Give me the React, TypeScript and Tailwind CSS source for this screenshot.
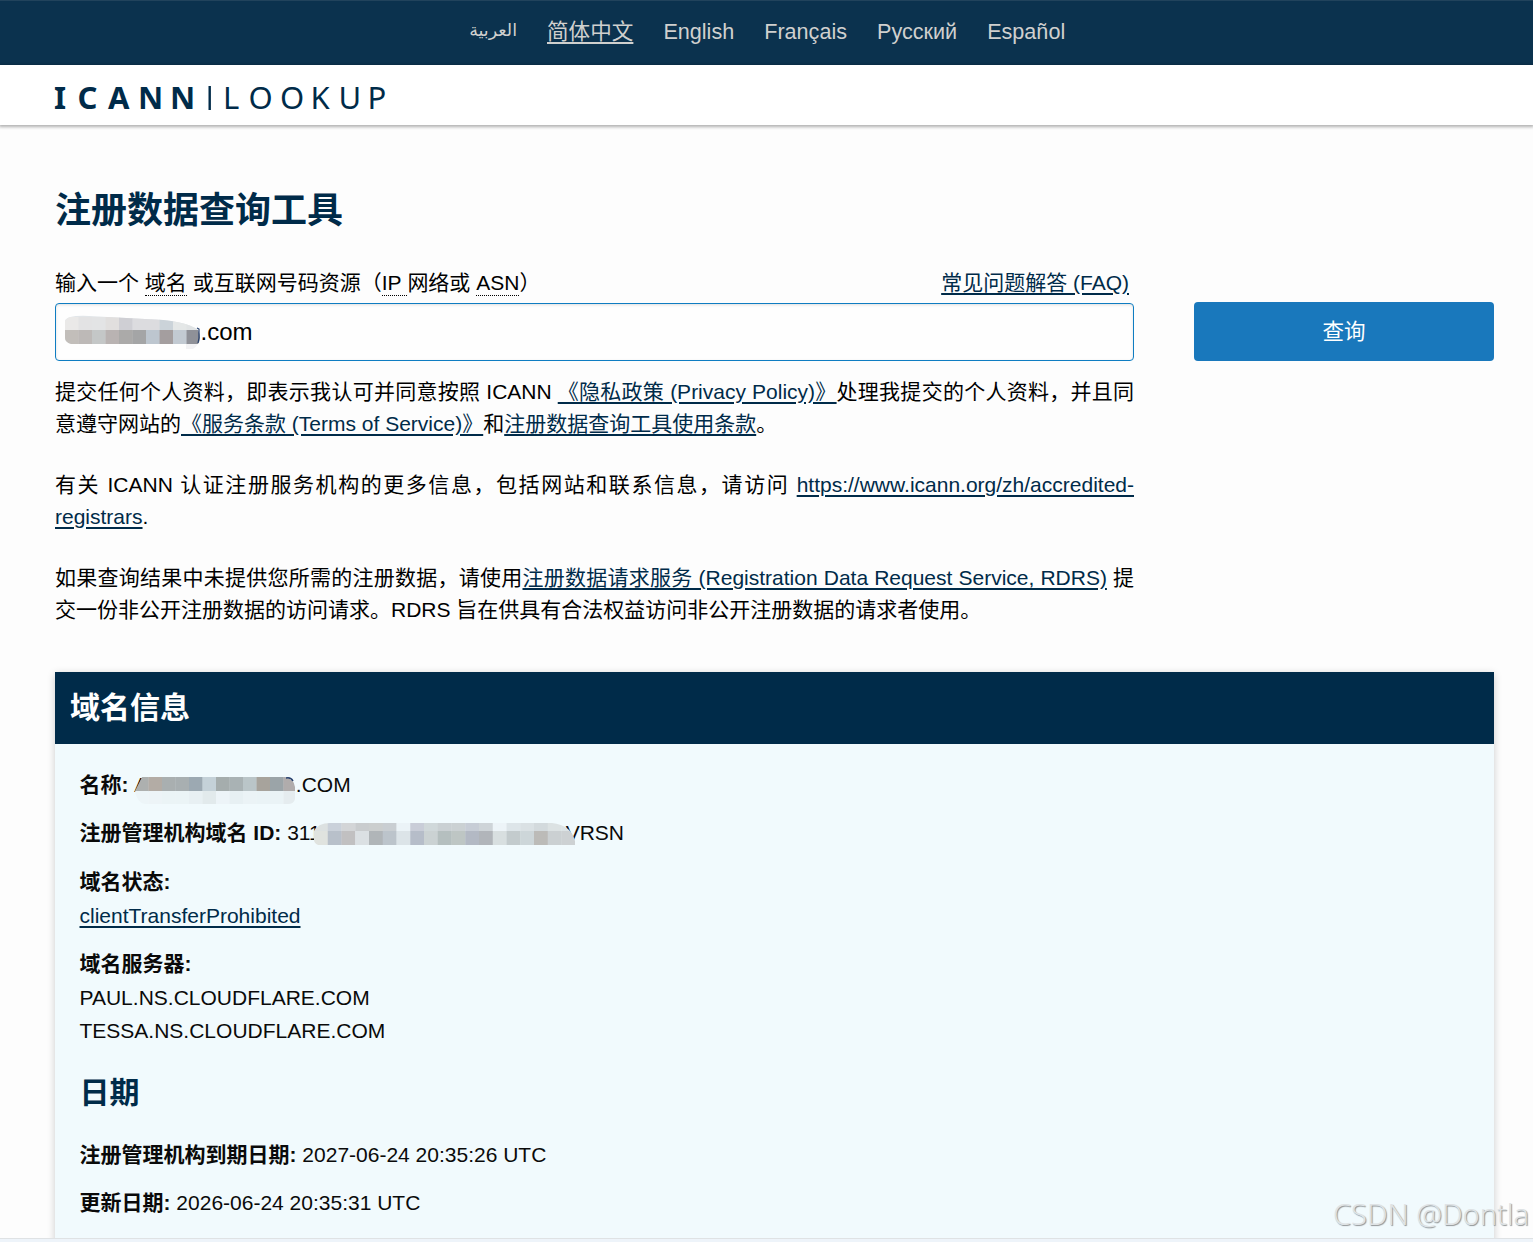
import type { ReactNode } from "react";

const languages = ["简体中文", "English", "Français", "Русский", "Español"];

const domainMosaic = {
  top: ["#eae9e8", "#e3e3e4", "#e3e4e5", "#e1dfde", "#cfcfd4", "#dcdcdf", "#dcdcdf", "#cbd3d9", "#e4e7e7", "#e0e3e4", "#dfdfe0"],
  bottom: ["#c2beba", "#bdb9b7", "#c4c7c7", "#b9b3b2", "#abaaa9", "#a4a5a6", "#bdc6cf", "#a49e9f", "#c2cad2", "#8f9198"],
};

const nameMosaic = ["#adb0af", "#b3aca5", "#a9afb0", "#a8afb1", "#9ca9b2", "#c4d1d8", "#a5adad", "#a9b2b4", "#bac5c8", "#a7a39c", "#9ba4a8", "#b0acac"];
const nameMosaicLow = ["#edf5f8", "#edf4f7", "#ebf4f6", "#ebf4f6", "#e8f0f3", "#e2eaec", "#edf4f8", "#e7f0f3", "#ebf3f6", "#eaf3f6", "#eaf3f6", "#e5ecef"];

const idMosaicTop = ["#dce1e1", "#cad1da", "#d3d5d7", "#c9ccce", "#cbcece", "#c9ced2", "#ebf3f7", "#c9cdd8", "#d0d8da", "#cad0d3", "#cbd1d3", "#c7cdd6", "#ced4d8", "#edf4f8", "#dde5e9", "#dae1e4", "#d3dadd", "#dce2e3", "#dce3e5"];
const idMosaic = ["#e0e3df", "#b8c0ca", "#c1c0c1", "#dbe0e3", "#b0b5b8", "#bcc4cb", "#dce4e8", "#b6bdc9", "#cbd2d3", "#b5bfbf", "#bec6c4", "#b3b9c4", "#b1b5ba", "#d8dfe0", "#c3cbcd", "#cdd6d9", "#bcbbb8", "#cbd0d2", "#cdd1d3"];

function Link({ children }: { children: ReactNode }) {
  return (
    <a href="#" className="text-[#002b49] underline decoration-2 underline-offset-[3px]">
      {children}
    </a>
  );
}

function Term({ children }: { children: ReactNode }) {
  return <span className="inline-block h-[26px] border-b border-dotted border-black leading-[26px]">{children}</span>;
}

function Cells({ colors, y, height, size }: { colors: string[]; y: number; height: number; size: number }) {
  return (
    <>
      {colors.map((color, i) => (
        <rect key={i} x={i * size} y={y} width={size + 0.3} height={height} fill={color} />
      ))}
    </>
  );
}

function Field({ label, children }: { label: string; children: ReactNode }) {
  return (
    <div className="relative mb-[15.5px] h-[33px] whitespace-nowrap leading-[33px]">
      <b>{label}:</b> {children}
    </div>
  );
}

function Logo() {
  return (
    <svg width="345" height="44" viewBox="0 0 345 44" fill="#002b49" className="block overflow-visible">
      <text
        x="-1 22.5 53 83 115"
        y="33.5"
        className="font-['Noto_Sans'] text-[31px] font-bold"
      >
        ICANN
      </text>
      <rect x="153.5" y="11" width="2.4" height="24" />
      <text
        x="168 193.5 225 255.5 283.5 312.5"
        y="33.5"
        className="font-['Noto_Sans'] text-[31px]"
      >
        LOOKUP
      </text>
    </svg>
  );
}

export default function App() {
  return (
    <div className="relative h-[1242px] w-[1533px] overflow-hidden bg-[#fdfdfd] font-['Liberation_Sans','Noto_Sans_CJK_SC',sans-serif] text-[21px] text-black">
      <nav className="flex h-[65px] items-start gap-[30px] border-t border-[#21435c] bg-[#0b324e] pl-[470px] pt-[15px] text-[21.6px] leading-8 text-[#d0d0ce]">
        <span className="-mt-0.5 w-[47px] whitespace-nowrap font-['DejaVu_Sans'] text-[17.5px]" dir="rtl">العربية</span>
        {languages.map((language, i) => (
          <a
            key={language}
            href="#"
            className={i === 0 ? "underline decoration-2 underline-offset-[3px]" : ""}
          >
            {language}
          </a>
        ))}
      </nav>

      <header className="relative h-[60px] bg-white pl-[55px] pt-[10px] shadow-[0_1px_3px_1px_rgba(0,0,0,0.3)]">
        <Logo />
      </header>

      <main className="pl-[55px] pr-[39px] pt-[59px]">
        <h1 className="h-[54px] text-[36px] font-bold leading-[54px] text-[#002b49]">注册数据查询工具</h1>

        <div className="mt-[29px] flex items-start justify-between">
          <div className="w-[1079px]">
            <div className="flex h-[36px] justify-between pr-[5px] leading-8">
              <label>
                输入一个 <Term>域名</Term> 或互联网号码资源（<Term>IP&nbsp;</Term>网络或 <Term>ASN</Term>）
              </label>
              <Link>常见问题解答 (FAQ)</Link>
            </div>
            <div className="relative h-[58px] rounded-[4px] border border-[#0f7dc2] bg-[#fefefe] pl-[144.5px] text-[24px] leading-[56px] shadow-[inset_0_1px_3px_rgba(0,0,0,0.12)]">
              .com
              <svg className="absolute left-[9px] top-[9px]" width="138" height="36">
                <clipPath id="domain-smudge">
                  <path d="M0 8 Q2 2 24 3 L80 6 Q120 7 133 17 Q137 25 133 31 H6 Q0 29 0 25Z" />
                </clipPath>
                <g clipPath="url(#domain-smudge)">
                  <rect width="138" height="36" fill="#e2e6e9" />
                  <Cells colors={domainMosaic.top} y={4} height={13} size={13.5} />
                  <Cells colors={domainMosaic.bottom} y={17} height={14} size={13.5} />
                </g>
                <path d="M121 31h12q-4 6-12 8z" fill="#f2f2f4" />
                <path d="M132 15l2 1v9l-1 5" fill="none" stroke="#27406d" strokeWidth="1.2" />
              </svg>
            </div>
            <p className="mt-[15px] text-justify leading-8">
              提交任何个人资料，即表示我认可并同意按照 ICANN <Link>《隐私政策 (Privacy Policy)》</Link>处理我提交的个人资料，并且同意遵守网站的<Link>《服务条款 (Terms of Service)》</Link>和<Link>注册数据查询工具使用条款</Link>。
            </p>
            <p className="mt-[29px] text-justify leading-8">
              有关 ICANN 认证注册服务机构的更多信息，包括网站和联系信息，请访问 <Link>https://www.icann.org/zh/accredited-registrars</Link>.
            </p>
            <p className="mt-[29px] text-justify leading-8">
              如果查询结果中未提供您所需的注册数据，请使用<Link>注册数据请求服务 (Registration Data Request Service, RDRS)</Link> 提交一份非公开注册数据的访问请求。RDRS 旨在供具有合法权益访问非公开注册数据的请求者使用。
            </p>
          </div>
          <button className="mt-[35px] h-[59px] w-[300px] rounded-[4px] bg-[#1978bc] pt-px text-[21.5px] text-white">查询</button>
        </div>

        <section className="mt-[46px] h-[600px] bg-[#f1fafd] shadow-[0_2px_8px_rgba(0,0,0,0.2)]">
          <h2 className="h-[72px] bg-[#002b49] pl-[15px] text-[30px] font-bold leading-[71px] text-white">域名信息</h2>
          <div className="pl-[24.5px] pt-[24px] text-[#0a0a0a]">
            <Field label="名称">
              <span className="inline-block w-[161.5px]">A</span>
              <span>.COM</span>
              <svg className="absolute left-[55px] top-[9px]" width="163" height="28">
                <clipPath id="name-smudge">
                  <path d="M7 0H150Q159 2 160 10V22Q159 27 153 27H10Q2 26 0 14Z" />
                </clipPath>
                <g clipPath="url(#name-smudge)">
                  <Cells colors={nameMosaic} y={0} height={14} size={13.5} />
                  <Cells colors={nameMosaicLow} y={14} height={13} size={13.5} />
                </g>
                <path d="M151 1q5-1 7 3" fill="none" stroke="#27406d" strokeWidth="1.5" />
              </svg>
            </Field>
            <div className="-mt-px mb-[16.5px] h-[33px]">
              <Field label="注册管理机构域名 ID">
                <span className="inline-block w-[278.5px]">311</span>
                <span>VRSN</span>
                <svg className="absolute left-[234px] top-[7px]" width="261" height="22">
                  <clipPath id="id-smudge">
                    <path d="M0 8Q4 0 16 0H238Q257 2 261 18V22H4Q0 20 0 17Z" />
                  </clipPath>
                  <g clipPath="url(#id-smudge)">
                    <Cells colors={idMosaicTop} y={0} height={8} size={13.75} />
                    <Cells colors={idMosaic} y={8} height={14} size={13.75} />
                  </g>
                </svg>
              </Field>
            </div>
            <div className="mb-[14px] leading-[34px]">
              <b>域名状态:</b>
              <div><Link>clientTransferProhibited</Link></div>
            </div>
            <div className="leading-[33.5px]">
              <b>域名服务器:</b>
              <div>PAUL.NS.CLOUDFLARE.COM</div>
              <div>TESSA.NS.CLOUDFLARE.COM</div>
            </div>
            <h3 className="mb-[23px] mt-[22px] h-[45px] text-[30px] font-bold leading-[45px] text-[#002b49]">日期</h3>
            <Field label="注册管理机构到期日期">2027-06-24 20:35:26 UTC</Field>
            <Field label="更新日期">2026-06-24 20:35:31 UTC</Field>
          </div>
        </section>
      </main>

      <div className="absolute inset-x-0 bottom-0 h-[4px] border-t border-[#dfe2e4] bg-[#eef4fa]" />
      <div className="absolute left-[1333px] top-[1196px] whitespace-nowrap font-['Noto_Sans'] text-[29px] font-light leading-9 text-[#dfe3e5] [text-shadow:1px_1px_1px_#8f9395]">
        CSDN @Dontla
      </div>
    </div>
  );
}
